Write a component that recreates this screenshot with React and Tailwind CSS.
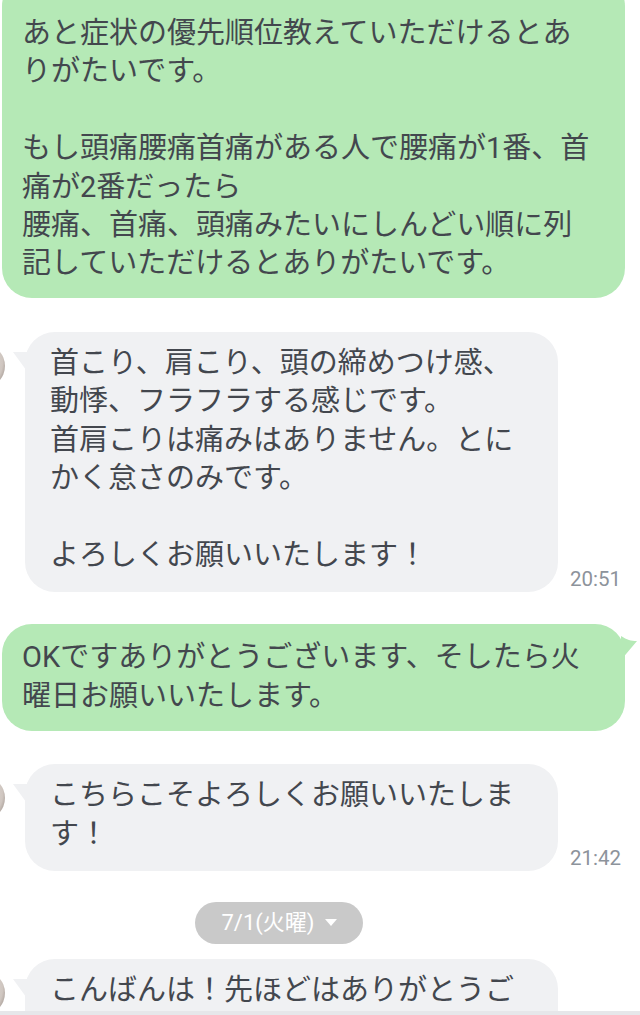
const FONT = "font-['Roboto','Noto_Sans_CJK_JP',sans-serif]";

function Avatar() {
  return (
    <div className="absolute left-[-64px] top-[12px] w-[44px] h-[44px] rounded-full bg-[radial-gradient(circle_at_30%_40%,#f3efec,#cfc6c0_70%,#6f625b)]" />
  );
}

function LeftTail() {
  return (
    <svg className="absolute left-[-12px] top-[20px]" width="16" height="22" viewBox="0 0 16 22">
      <path d="M0 0 H16 V22 Z" fill="#f0f1f3" />
    </svg>
  );
}

function RightTail() {
  return (
    <svg className="absolute right-[-12px] top-[12px]" width="16" height="24" viewBox="0 0 16 24">
      <path d="M0 0 C6 4 10 5 16 5 L0 24 Z" fill="#b5e9b6" />
    </svg>
  );
}

function Incoming({ lines, time, className = '' }) {
  return (
    <div className={`flex items-end pl-[25px] ${className}`}>
      <div className="relative w-[533px] rounded-[30px] bg-[#f0f1f3] pl-[25px] pr-[20px] pt-[12px] pb-[18px] text-[29px] leading-[38.4px] text-[#43474e] whitespace-pre-line">
        <Avatar />
        <LeftTail />
        {lines}
      </div>
      {time && (
        <div className="ml-[12px] mb-[1px] text-[20.5px] leading-[24px] text-[#8d939b]">{time}</div>
      )}
    </div>
  );
}

function Outgoing({ lines, tail, className = '' }) {
  return (
    <div className={`relative ml-[2px] w-[623px] bg-[#b5e9b6] pl-[20px] pr-[14px] text-[29px] leading-[38.4px] text-[#43474e] whitespace-pre-line ${className}`}>
      {tail && <RightTail />}
      {lines}
    </div>
  );
}

export default function App() {
  return (
    <div className={`relative w-[640px] h-[1015px] overflow-hidden bg-white ${FONT}`}>
      <div className="flex flex-col">
        <Outgoing
          className="-mt-[24px] pt-[38px] pb-[15px] rounded-[30px]"
          lines={'あと症状の優先順位教えていただけるとあ\nりがたいです。\n\nもし頭痛腰痛首痛がある人で腰痛が1番、首\n痛が2番だったら\n腰痛、首痛、頭痛みたいにしんどい順に列\n記していただけるとありがたいです。'}
        />

        <Incoming
          className="mt-[34px]"
          time="20:51"
          lines={'首こり、肩こり、頭の締めつけ感、\n動悸、フラフラする感じです。\n首肩こりは痛みはありません。とに\nかく怠さのみです。\n\nよろしくお願いいたします！'}
        />

        <Outgoing
          tail
          className="mt-[32px] pt-[14px] pb-[16px] rounded-[30px]"
          lines={'OKですありがとうございます、そしたら火\n曜日お願いいたします。'}
        />

        <Incoming
          className="mt-[33px]"
          time="21:42"
          lines={'こちらこそよろしくお願いいたしま\nす！'}
        />

        <div className="mt-[31px] ml-[195px] w-[168px] h-[42px] rounded-full bg-[#c9c9c9] flex items-center justify-center gap-[10px] text-white text-[22px]">
          <span>7/1(火曜)</span>
          <svg width="12" height="8" viewBox="0 0 12 8">
            <path d="M0 0 H12 L6 7 Z" fill="#ffffff" />
          </svg>
        </div>

        <Incoming
          className="mt-[15px]"
          lines={'こんばんは！先ほどはありがとうご\nざいました。'}
        />
      </div>

      <div className="absolute left-0 right-0 bottom-0 h-[4px] bg-[#e6e7ea]" />
    </div>
  );
}
